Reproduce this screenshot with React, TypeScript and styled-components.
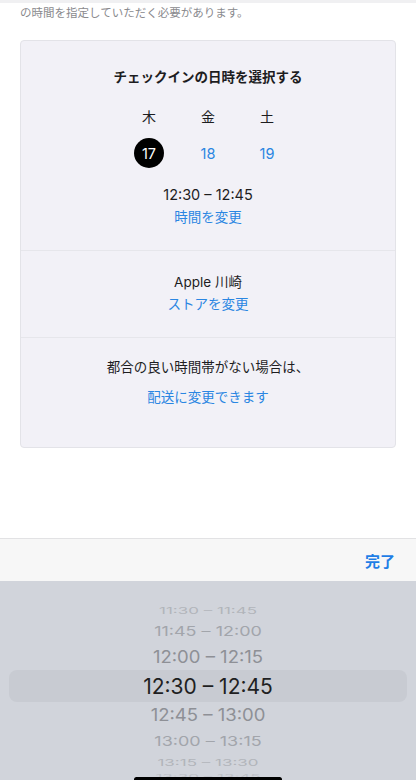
import React from 'react'
import styled, { createGlobalStyle } from 'styled-components'

const GlobalStyle = createGlobalStyle`
    html, body {
        margin: 0;
        padding: 0;
        background: #ffffff;
    }
    body {
        font-family: 'Inter', 'Noto Sans CJK JP', sans-serif;
        -webkit-font-smoothing: antialiased;
    }
`

const days = [
    { weekday: '木', date: 17 },
    { weekday: '金', date: 18 },
    { weekday: '土', date: 19 },
]

const slots = [
    { label: '11:30 – 11:45', level: 3 },
    { label: '11:45 – 12:00', level: 2 },
    { label: '12:00 – 12:15', level: 1 },
    { label: '12:30 – 12:45', level: 0 },
    { label: '12:45 – 13:00', level: 1 },
    { label: '13:00 – 13:15', level: 2 },
    { label: '13:15 – 13:30', level: 3 },
    { label: '13:30 – 13:45', level: 4 },
]

const App = () => {
    const selected = 17

    return (
        <Screen>
            <GlobalStyle />
            <TopEdge />
            <Intro>の時間を指定していただく必要があります。</Intro>

            <Card>
                <Section $top={24} $bottom={22}>
                    <Title>チェックインの日時を選択する</Title>
                    <DayGrid>
                        {days.map((d) => (
                            <DayColumn key={d.date}>
                                <Weekday>{d.weekday}</Weekday>
                                <DateButton $active={d.date === selected}>
                                    {d.date}
                                </DateButton>
                            </DayColumn>
                        ))}
                    </DayGrid>
                    <TimeText>12:30 – 12:45</TimeText>
                    <Link>時間を変更</Link>
                </Section>

                <Section $top={20} $bottom={22}>
                    <Plain>Apple 川崎</Plain>
                    <Link>ストアを変更</Link>
                </Section>

                <Section $top={18} $bottom={36} $gap={8}>
                    <Plain>都合の良い時間帯がない場合は、</Plain>
                    <Link>配送に変更できます</Link>
                </Section>
            </Card>

            <Spacer />

            <Toolbar>
                <DoneButton>完了</DoneButton>
            </Toolbar>

            <Picker>
                <Band />
                <Wheel>
                    {slots.map((s) => (
                        <Slot key={s.label} $level={s.level}>
                            <SlotText $level={s.level}>{s.label}</SlotText>
                        </Slot>
                    ))}
                </Wheel>
                <HomeBar />
            </Picker>
        </Screen>
    )
}

export default App

const Screen = styled.div`
    width: 416px;
    height: 780px;
    display: flex;
    flex-direction: column;
    overflow: hidden;
    background: #ffffff;
`

const TopEdge = styled.div`
    height: 3px;
    background: #f0f0f2;
`

const Intro = styled.p`
    margin: 0;
    padding: 0 20px;
    height: 22px;
    line-height: 21px;
    font-size: 11.5px;
    color: #8a8a8e;
`

const Card = styled.div`
    margin: 15px 20px 0;
    height: 408px;
    box-sizing: border-box;
    background: #f2f1f7;
    border: 1px solid #e3e3e8;
    border-radius: 4px;
    display: flex;
    flex-direction: column;
`

const Section = styled.div<{ $top: number; $bottom: number; $gap?: number }>`
    display: flex;
    flex-direction: column;
    align-items: center;
    gap: ${(p) => p.$gap ?? 0}px;
    padding: ${(p) => p.$top}px 0 ${(p) => p.$bottom}px;

    & + & {
        border-top: 1px solid #e6e6eb;
    }
`

const Title = styled.h2`
    margin: 0;
    font-size: 13.5px;
    line-height: 24px;
    font-weight: 700;
    color: #1d1d1f;
`

const DayGrid = styled.div`
    display: flex;
    gap: 29px;
    margin-top: 18px;
`

const DayColumn = styled.div`
    width: 30px;
    display: flex;
    flex-direction: column;
    align-items: center;
    gap: 11px;
`

const Weekday = styled.span`
    font-size: 14px;
    line-height: 20px;
    color: #1d1d1f;
`

const DateButton = styled.span<{ $active: boolean }>`
    width: 30px;
    height: 30px;
    border-radius: 50%;
    display: flex;
    align-items: center;
    justify-content: center;
    font-size: 14.5px;
    background: ${(p) => (p.$active ? '#000000' : 'transparent')};
    color: ${(p) => (p.$active ? '#ffffff' : '#2a86e2')};
`

const TimeText = styled.span`
    margin-top: 16px;
    font-size: 14.5px;
    line-height: 22px;
    color: #1d1d1f;
`

const Plain = styled.span`
    font-size: 13.5px;
    line-height: 22px;
    color: #1d1d1f;
`

const Link = styled.span`
    font-size: 13.5px;
    line-height: 22px;
    color: #2a86e2;
`

const Spacer = styled.div`
    flex: 1;
`

const Toolbar = styled.div`
    height: 43px;
    flex-shrink: 0;
    box-sizing: border-box;
    border-top: 1px solid #e2e2e4;
    background: #f7f7f7;
    display: flex;
    align-items: center;
    justify-content: flex-end;
    padding-right: 21px;
`

const DoneButton = styled.span`
    font-size: 15px;
    font-weight: 700;
    color: #1f7ee6;
`

const Picker = styled.div`
    position: relative;
    height: 199px;
    flex-shrink: 0;
    background: #d1d4db;
    overflow: hidden;
`

const Band = styled.div`
    position: absolute;
    left: 9px;
    right: 9px;
    top: 89px;
    height: 32px;
    border-radius: 8px;
    background: #c8cbd2;
`

// wheel rows get flatter and paler away from the selection band
const slotStyle = [
    { size: 21, scale: 1, color: '#1f1f22', height: 30 },
    { size: 18.5, scale: 0.92, color: '#8e9096', height: 28 },
    { size: 18, scale: 0.75, color: '#a2a5ab', height: 24 },
    { size: 17, scale: 0.55, color: '#b1b4ba', height: 18 },
    { size: 17, scale: 0.35, color: '#bec1c7', height: 12 },
]

const Wheel = styled.div`
    position: relative;
    display: flex;
    flex-direction: column;
    align-items: center;
    padding-top: 20px;
`

const Slot = styled.div<{ $level: number }>`
    height: ${(p) => slotStyle[p.$level].height}px;
    display: flex;
    align-items: center;
`

const SlotText = styled.span<{ $level: number }>`
    display: inline-block;
    font-family: 'Inter', sans-serif;
    font-size: ${(p) => slotStyle[p.$level].size}px;
    line-height: 1;
    color: ${(p) => slotStyle[p.$level].color};
    transform: scaleY(${(p) => slotStyle[p.$level].scale});
    white-space: pre;
`

const HomeBar = styled.div`
    position: absolute;
    left: 134px;
    bottom: -2px;
    width: 148px;
    height: 5px;
    border-radius: 3px;
    background: #000000;
`
